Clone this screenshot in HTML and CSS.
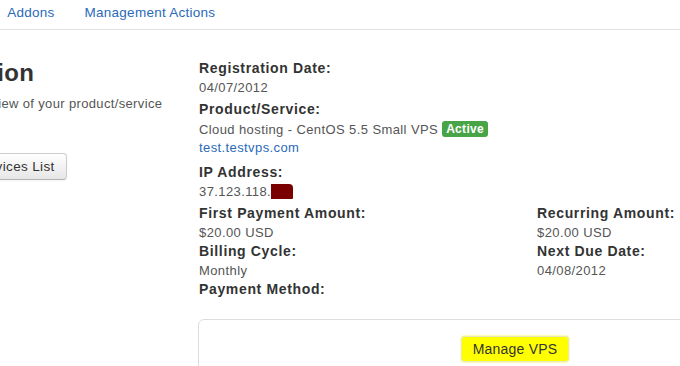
FILE: index.html
```html
<!DOCTYPE html>
<html lang="en">
<head>
  <meta charset="UTF-8" />
  <meta name="viewport" content="width=device-width, initial-scale=1.0" />
  <title>Product Details</title>
  <link rel="stylesheet" href="styles.css">
</head>
<body>
  <div class="page">
    <ul class="tabs">
      <li class="active"><a href="#">Information</a></li>
      <li><a href="#">Addons</a></li>
      <li><a href="#">Management Actions</a></li>
    </ul>

    <div class="content">
      <div class="side">
        <h2>Information</h2>
        <p class="intro">Here is an overview of your product/service</p>
        <button class="btn">&laquo; Back to Services List</button>
      </div>

      <div class="details">
        <div class="label">Registration Date:</div>
        <div class="value">04/07/2012</div>

        <div class="label gap">Product/Service:</div>
        <div class="value first">Cloud hosting - CentOS 5.5 Small VPS <span class="badge">Active</span></div>
        <div class="value link"><a href="#">test.testvps.com</a></div>

        <div class="label gap-lg">IP Address:</div>
        <div class="value">37.123.118.<span class="redact"></span></div>

        <div class="cols">
          <div class="col">
            <div class="label">First Payment Amount:</div>
            <div class="value">$20.00 USD</div>
            <div class="label">Billing Cycle:</div>
            <div class="value">Monthly</div>
            <div class="label">Payment Method:</div>
          </div>
          <div class="col">
            <div class="label">Recurring Amount:</div>
            <div class="value">$20.00 USD</div>
            <div class="label">Next Due Date:</div>
            <div class="value">04/08/2012</div>
          </div>
        </div>

        <div class="module">
          <button class="btn-manage">Manage VPS</button>
        </div>
      </div>
    </div>
  </div>
</body>
</html>
```

FILE: styles.css
```css
* {
  margin: 0;
  padding: 0;
  box-sizing: border-box;
}

body {
  font-family: "Liberation Sans", Arial, sans-serif;
  font-size: 13px;
  letter-spacing: 0.4px;
  color: #555;
  background: #fff;
  overflow: hidden;
}

a {
  color: #2a6ab8;
  text-decoration: none;
}

.page {
  width: 1000px;
  margin-left: -110px;
}

/* tabs */
.tabs {
  list-style: none;
  display: flex;
  height: 30px;
  border-bottom: 1px solid #dfe3e8;
}

.tabs li a {
  display: block;
  padding: 3px 15px 7px;
  line-height: 19px;
  font-size: 13.5px;
  letter-spacing: 0.25px;
}

.tabs li.active a {
  color: #555;
  border: 1px solid #dfe3e8;
  border-bottom-color: #fff;
  border-radius: 4px 4px 0 0;
  height: 30px;
}

/* layout */
.content {
  display: flex;
  gap: 20px;
}

.side {
  width: 289px;
  padding-left: 8px;
}

.side h2 {
  font-size: 24px;
  color: #333;
  line-height: 30px;
  margin-top: 28px;
}

.intro {
  margin-top: 6px;
  line-height: 19px;
  letter-spacing: 0.35px;
}

.btn {
  margin-top: 40px;
  font-family: inherit;
  font-size: 13.5px;
  letter-spacing: 0.35px;
  color: #333;
  padding: 4px 11px;
  line-height: 17px;
  border: 1px solid #ccc;
  border-bottom-color: #b3b3b3;
  border-radius: 4px;
  background: linear-gradient(#ffffff, #e6e6e6);
  box-shadow: inset 0 1px 0 rgba(255,255,255,0.2), 0 1px 2px rgba(0,0,0,0.05);
}

/* details */
.details {
  flex: 1;
  padding-top: 29px;
}

.label {
  font-size: 14px;
  font-weight: bold;
  letter-spacing: 0.65px;
  color: #333;
  line-height: 19px;
}

.value {
  line-height: 19px;
}

.value.link {
  line-height: 17px;
}

.gap {
  margin-top: 3px;
}

.value.first {
  margin-top: 1px;
}

.gap-lg {
  margin-top: 7px;
}

.badge {
  display: inline-block;
  background: #47a447;
  color: #fff;
  font-size: 12px;
  font-weight: bold;
  letter-spacing: 0.3px;
  line-height: 12px;
  padding: 2px 4px;
  border-radius: 3px;
  vertical-align: 1px;
}

.redact {
  display: inline-block;
  width: 22px;
  height: 15px;
  background: #7a0000;
  vertical-align: -3px;
  border-radius: 0 4px 1px 0;
}

.cols {
  display: grid;
  grid-template-columns: 338px 1fr;
  margin-top: 3px;
}

.module {
  width: 634px;
  height: 80px;
  margin-top: 20px;
  margin-left: -1px;
  border: 1px solid #ddd;
  border-radius: 6px;
  padding-top: 16px;
  text-align: center;
}

.btn-manage {
  font-family: inherit;
  font-size: 14px;
  letter-spacing: 0.2px;
  color: #333;
  padding: 3px 11px;
  line-height: 18px;
  background: #ffff00;
  border: 1px solid #e8e8c0;
  border-radius: 4px;
  box-shadow: 0 0 2px #f0f000;
}
```
